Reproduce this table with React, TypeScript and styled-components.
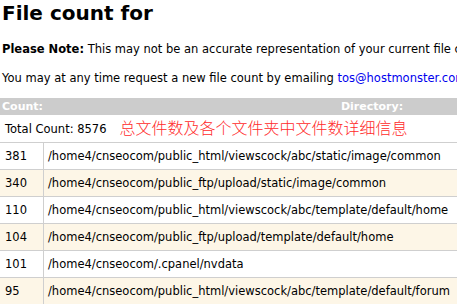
import React from 'react';
import styled, { createGlobalStyle } from 'styled-components';

const GlobalStyle = createGlobalStyle`
  html, body {
    margin: 0;
    padding: 0;
    background: #fff;
    overflow: hidden;
  }
  body {
    font-family: Verdana, 'DejaVu Sans', sans-serif;
    font-size: 11.5px;
    color: #000;
  }
`;

const Page = styled.div`
  padding: 0 0 0 2px;
  width: 760px;
`;

const Title = styled.h1`
  font-size: 20px;
  font-weight: bold;
  margin: 2px 0 0;
  line-height: 23px;
`;

const Note = styled.p<{ $top: number }>`
  margin: ${p => p.$top}px 0 0;
  line-height: 13px;
  white-space: nowrap;
`;

const MailLink = styled.a`
  color: #0000ee;
  text-decoration: none;
`;

const CountTable = styled.table`
  margin: 13px 0 0 -2px;
  width: 700px;
  border-spacing: 0;
  table-layout: fixed;
  font-size: 11.5px;
`;

const HeadCell = styled.th<{ $center?: boolean }>`
  background: #cccccc;
  color: #fff;
  font-size: 11px;
  font-weight: bold;
  text-align: ${p => (p.$center ? 'center' : 'left')};
  line-height: 17px;
  padding: 0 2px;
  white-space: nowrap;
`;

const TotalCell = styled.td`
  line-height: 25px;
  padding: 0 5px;
  border-bottom: 1px solid #cfcfcf;
  white-space: nowrap;
`;

const Note2 = styled.span`
  margin-left: 13px;
  color: #ff2a2a;
  font-family: 'Noto Sans CJK SC', sans-serif;
  font-size: 16px;
  font-weight: 300;
  vertical-align: -1px;
`;

const Row = styled.tr<{ $odd: boolean }>`
  background: ${p => (p.$odd ? '#fdf6e7' : '#ffffff')};
`;

const Cell = styled.td<{ $first?: boolean }>`
  line-height: 26px;
  padding: 0 0 0 ${p => (p.$first ? 5 : 4)}px;
  border-bottom: 1px solid #cfcfcf;
  border-right: ${p => (p.$first ? '1px solid #cfcfcf' : 'none')};
  white-space: nowrap;
  overflow: hidden;
`;

const rows = [
  { count: 381, dir: '/home4/cnseocom/public_html/viewscock/abc/static/image/common' },
  { count: 340, dir: '/home4/cnseocom/public_ftp/upload/static/image/common' },
  { count: 110, dir: '/home4/cnseocom/public_html/viewscock/abc/template/default/home' },
  { count: 104, dir: '/home4/cnseocom/public_ftp/upload/template/default/home' },
  { count: 101, dir: '/home4/cnseocom/.cpanel/nvdata' },
  { count: 95, dir: '/home4/cnseocom/public_html/viewscock/abc/template/default/forum' },
  { count: 94, dir: '/home4/cnseocom/public_ftp/upload/template/default/forum' },
];

export default function App() {
  return (
    <>
      <GlobalStyle />
      <Page>
        <Title>File count for</Title>
        <Note $top={18}>
          <b>Please Note:</b> This may not be an accurate representation of your current file count.
        </Note>
        <Note $top={16}>
          You may at any time request a new file count by emailing{' '}
          <MailLink href="#">tos@hostmonster.com</MailLink>
        </Note>
        <CountTable>
          <colgroup>
            <col style={{ width: 44 }} />
            <col />
          </colgroup>
          <thead>
            <tr>
              <HeadCell>Count:</HeadCell>
              <HeadCell $center>Directory:</HeadCell>
            </tr>
          </thead>
          <tbody>
            <tr>
              <TotalCell colSpan={2}>
                Total Count: 8576
                <Note2>总文件数及各个文件夹中文件数详细信息</Note2>
              </TotalCell>
            </tr>
            {rows.map((r, i) => (
              <Row key={i} $odd={i % 2 === 1}>
                <Cell $first>{r.count}</Cell>
                <Cell>{r.dir}</Cell>
              </Row>
            ))}
          </tbody>
        </CountTable>
      </Page>
    </>
  );
}
